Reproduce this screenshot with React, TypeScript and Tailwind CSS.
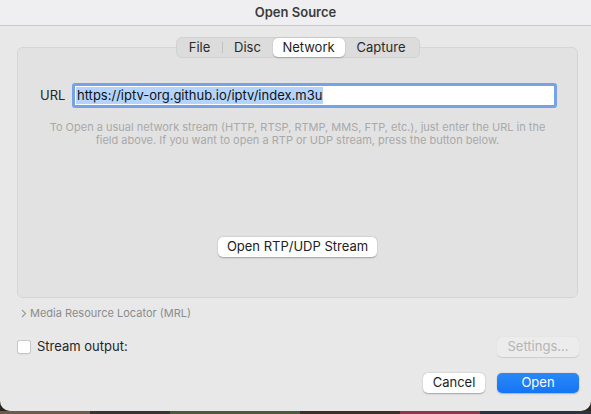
import React from "react";

const tabs = ["File", "Disc", "Network", "Capture"];
const tabWidths = ["w-[44px]", "w-[50px]", "w-[72px]", "w-[73px]"];

const App = () => {
  return (
    <div
      className="w-[591px] h-[414px] bg-[#2b2620] overflow-hidden"
      style={{ fontFamily: "Inter, 'Liberation Sans', sans-serif" }}
    >
      <div className="h-[411px] flex flex-col bg-[#e8e8e8] rounded-b-[10px] text-[#262626]">
        {/* title bar */}
        <div className="h-[26px] shrink-0 flex items-center justify-center bg-[#efeff1] border-b border-[#c9c9c9] text-[13px] font-semibold text-[#3b3b3b]">
          Open Source
        </div>

        <div className="flex flex-col pl-[17px] pr-[12px]">
          {/* tabs */}
          <div className="relative z-10 flex justify-center pt-[11px] pr-[1px]">
            <div className="flex items-center h-[21px] p-[1px] rounded-[6px] bg-[#dcdcdc] border border-[#d2d2d2] text-[13px]">
              {tabs.map((t, i) => (
                <React.Fragment key={t}>
                  {i === 1 && <div className="w-px h-[11px] bg-[#c2c2c2]" />}
                  <div
                    className={
                      t === "Network"
                        ? `${tabWidths[i]} h-[19px] flex items-center justify-center rounded-[5px] bg-white shadow-[0_0.5px_1.5px_rgba(0,0,0,0.25)] text-[#1e1e1e]`
                        : `${tabWidths[i]} h-[19px] flex items-center justify-center text-[#2a2a2a]`
                    }
                  >
                    {t}
                  </div>
                </React.Fragment>
              ))}
            </div>
          </div>

          {/* panel */}
          <div className="-mt-[11px] mr-[1px] h-[251px] rounded-[6px] bg-[#e2e2e2] border border-[#d5d5d5] flex flex-col items-center">
            <div className="flex items-center self-stretch mt-[35px] pl-[22px] pr-[20px]">
              <span className="text-[13px] text-[#262626] w-[32px]">URL</span>
              <div className="flex-1 h-[25px] rounded-[3px] border-[3px] border-[#77a3e6] bg-white flex items-center pl-[1px]">
                <span className="bg-[#b3d4fc] text-[13px] leading-[17px] text-[#111] px-[1px]">
                  https://iptv-org.github.io/iptv/index.m3u
                </span>
              </div>
            </div>
            <p className="mt-[13px] text-center text-[11px] leading-[13px] text-[#a9a9a9] w-[520px]">
              To Open a usual network stream (HTTP, RTSP, RTMP, MMS, FTP, etc.), just enter the URL in the
              field above. If you want to open a RTP or UDP stream, press the button below.
            </p>
            <button className="mt-[90px] w-[159px] h-[20px] rounded-[5px] bg-white shadow-[0_0.5px_1.5px_rgba(0,0,0,0.3)] text-[13px] text-[#222]">
              Open RTP/UDP Stream
            </button>
          </div>

          {/* MRL */}
          <div className="flex items-center h-[14px] mt-[8px] pl-[4px] text-[11px] text-[#8c8c8c]">
            <svg width="6" height="9" viewBox="0 0 6 9" className="mr-[3px]">
              <path d="M1 1l3.5 3.5L1 8" fill="none" stroke="#9a9a9a" strokeWidth="1.1" />
            </svg>
            Media Resource Locator (MRL)
          </div>

          {/* stream output */}
          <div className="flex items-center justify-between h-[20px] mt-[17px]">
            <div className="flex items-center">
              <div className="w-[14px] h-[14px] rounded-[3px] bg-white border border-[#c6c6c6] shadow-[0_0.5px_0.5px_rgba(0,0,0,0.08)]" />
              <span className="ml-[6px] text-[13px] text-[#262626]">Stream output:</span>
            </div>
            <button className="w-[82px] h-[20px] rounded-[5px] bg-[#ececec] shadow-[0_0.5px_1px_rgba(0,0,0,0.12)] text-[13px] text-[#b5b5b5]">
              Settings...
            </button>
          </div>

          {/* buttons */}
          <div className="flex justify-end items-center gap-[12px] mt-[16px]">
            <button className="w-[62px] h-[20px] rounded-[5px] bg-white shadow-[0_0.5px_1.5px_rgba(0,0,0,0.3)] text-[13px] text-[#1e1e1e]">
              Cancel
            </button>
            <button className="w-[82px] h-[20px] rounded-[5px] bg-gradient-to-b from-[#2b88f8] to-[#1475f4] shadow-[0_0.5px_1.5px_rgba(0,0,0,0.25)] text-[13px] text-white">
              Open
            </button>
          </div>
        </div>
      </div>
      <div className="flex h-[3px]">
        <div className="w-[90px] bg-[#6e5a4a]" />
        <div className="w-[80px] bg-[#3a3530]" />
        <div className="w-[130px] bg-[#4c5a3a]" />
        <div className="w-[100px] bg-[#3d3228]" />
        <div className="w-[80px] bg-[#8a3a4a]" />
        <div className="flex-1 bg-[#2c3340]" />
      </div>
    </div>
  );
};

export default App;
